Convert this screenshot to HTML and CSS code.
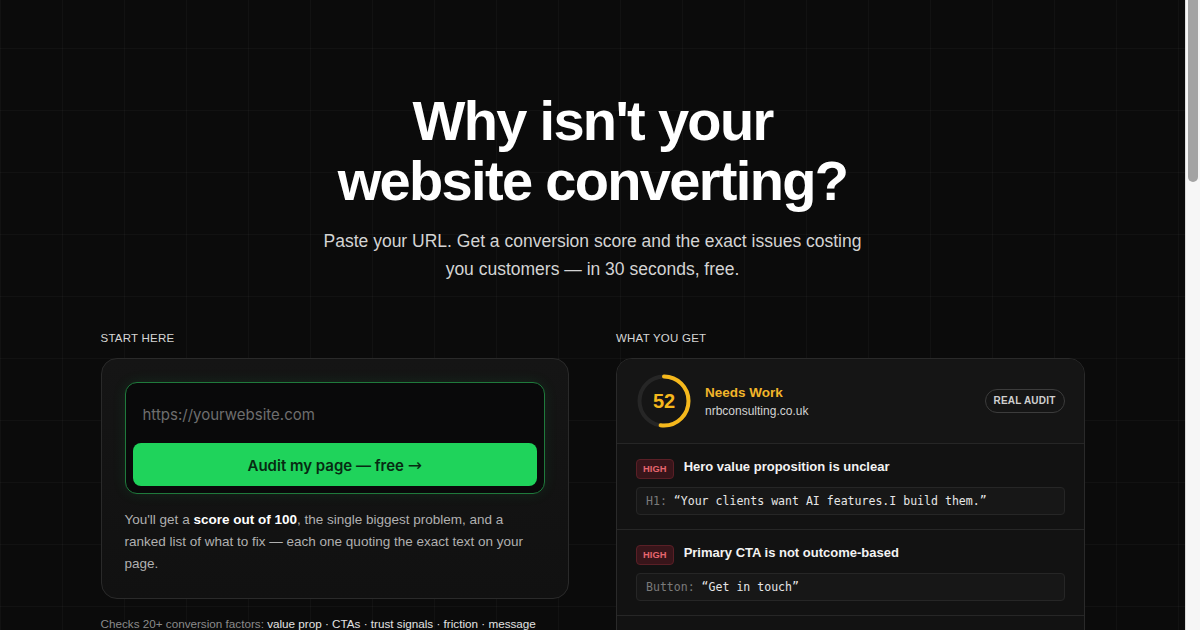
FILE: index.html
```html
<!DOCTYPE html>
<html lang="en">
<head>
<meta charset="utf-8">
<title>Why isn't your website converting?</title>
<link rel="stylesheet" href="styles.css">
</head>
<body>
<main class="page">
  <section class="hero">
    <h1 class="title">Why isn't your<br>website converting?</h1>
    <p class="subtitle">Paste your URL. Get a conversion score and the exact issues costing you customers — in 30 seconds, free.</p>
  </section>

  <section class="columns">
    <div class="col">
      <div class="label">START HERE</div>
      <div class="card form-card">
        <form class="url-group">
          <input class="url-input" type="text" placeholder="https://yourwebsite.com">
          <button class="cta" type="button">Audit my page — free <span class="arrow">→</span></button>
        </form>
        <p class="explain">You'll get a <strong>score out of 100</strong>, the single biggest problem, and a ranked list of what to fix — each one quoting the exact text on your page.</p>
      </div>
      <p class="checks">Checks 20+ conversion factors: <span class="hl">value prop · CTAs · trust signals · friction · message match</span></p>
    </div>

    <div class="col">
      <div class="label">WHAT YOU GET</div>
      <div class="card report">
        <div class="report-head">
          <div class="ring">
            <svg viewBox="0 0 54 54" width="54" height="54">
              <circle cx="27" cy="27" r="24.5" fill="none" stroke="#262626" stroke-width="4"/>
              <circle cx="27" cy="27" r="24.5" fill="none" stroke="#f5b81c" stroke-width="4" stroke-linecap="round" stroke-dasharray="80 154" transform="rotate(-90 27 27)"/>
            </svg>
            <span class="ring-num">52</span>
          </div>
          <div class="head-text">
            <div class="status">Needs Work</div>
            <div class="domain">nrbconsulting.co.uk</div>
          </div>
          <span class="pill">REAL AUDIT</span>
        </div>
        <div class="issue">
          <div class="issue-top"><span class="badge">HIGH</span><span class="issue-title">Hero value proposition is unclear</span></div>
          <div class="quote"><span class="q-key">H1:</span> “Your clients want AI features.I build them.”</div>
        </div>
        <div class="issue">
          <div class="issue-top"><span class="badge">HIGH</span><span class="issue-title">Primary CTA is not outcome-based</span></div>
          <div class="quote"><span class="q-key">Button:</span> “Get in touch”</div>
        </div>
        <div class="issue">
          <div class="issue-top"><span class="badge badge-med">MED</span><span class="issue-title">No trust signals above the fold</span></div>
          <div class="quote"><span class="q-key">Hero:</span> no logos, reviews or results found</div>
        </div>
      </div>
    </div>
  </section>
</main>
<div class="scrollbar" aria-hidden="true"><div class="scroll-thumb"></div></div>
</body>
</html>
```

FILE: styles.css
```css
* { box-sizing: border-box; }

html, body {
  margin: 0;
  padding: 0;
}

body {
  background-color: #0b0b0b;
  background-image:
    linear-gradient(to right, rgba(255,255,255,0.028) 1px, transparent 1px),
    linear-gradient(to bottom, rgba(255,255,255,0.028) 1px, transparent 1px);
  background-size: 62px 62px;
  background-position: 0 -14px;
  color: #f2f2f2;
  font-family: "Liberation Sans", Arial, sans-serif;
  min-height: 1100px;
  padding-right: 15px;
}

.page {
  max-width: 984px;
  margin: 0 auto;
  padding: 91px 0 120px;
}

.hero {
  text-align: center;
}

.title {
  margin: 0;
  font-size: 56px;
  line-height: 60px;
  font-weight: 700;
  letter-spacing: -0.03em;
  color: #ffffff;
}

.subtitle {
  margin: 16px auto 0;
  max-width: 560px;
  font-size: 17.5px;
  line-height: 28px;
  color: #d4d4d4;
}

.columns {
  margin-top: 47px;
  display: grid;
  grid-template-columns: 1fr 1fr;
  gap: 47px;
}

.label {
  font-size: 11.5px;
  line-height: 16px;
  letter-spacing: 0.02em;
  color: #d6d6d6;
  margin-bottom: 12px;
}

.card {
  border: 1px solid #2a2a2a;
  border-radius: 16px;
  background: linear-gradient(180deg, #151515 0%, #111111 100%);
}

.form-card {
  padding: 23px;
}

.url-group {
  margin: 0;
  border: 1px solid #1f7a3c;
  border-radius: 12px;
  background: #09090a;
  padding: 7px;
  display: flex;
  flex-direction: column;
  gap: 5px;
  box-shadow: 0 0 14px rgba(30, 215, 96, 0.10);
}

.url-input {
  height: 48px;
  border: 0;
  outline: 0;
  background: transparent;
  padding: 0 10px;
  font-family: Inter, "Noto Sans", sans-serif;
  font-size: 15px;
  color: #e0e0e0;
}

.url-input::placeholder {
  color: #6e6e6e;
}

.cta {
  height: 43px;
  border: 0;
  border-radius: 8px;
  background: #1fd35b;
  color: #072a12;
  font-family: Inter, "Noto Sans", sans-serif;
  font-size: 15px;
  font-weight: 600;
  cursor: pointer;
}

.arrow {
  font-family: "DejaVu Sans", sans-serif;
  font-size: 17px;
  font-weight: 400;
}

.explain {
  margin: 15px 0 0;
  font-size: 13.5px;
  line-height: 22px;
  color: #b0b0b0;
}

.explain strong {
  color: #ffffff;
  font-weight: 700;
}

.checks {
  margin: 16px 0 0;
  font-size: 11.7px;
  line-height: 18px;
  color: #8a8a8a;
}

.checks .hl {
  color: #e2e2e2;
}

.report {
  overflow: hidden;
  background: #121212;
}

.report-head {
  display: flex;
  align-items: center;
  gap: 14px;
  padding: 15px 19px 15px 20px;
  background: #151515;
  border-bottom: 1px solid #262626;
}

.ring {
  position: relative;
  width: 54px;
  height: 54px;
  flex: none;
}

.ring svg {
  display: block;
}

.ring-num {
  position: absolute;
  inset: 0;
  display: flex;
  align-items: center;
  justify-content: center;
  font-size: 20px;
  font-weight: 700;
  color: #f5b81c;
}

.head-text {
  flex: 1;
  display: flex;
  flex-direction: column;
  gap: 1px;
}

.status {
  font-size: 13.5px;
  line-height: 18px;
  font-weight: 700;
  color: #f2b52a;
}

.domain {
  font-size: 12px;
  line-height: 16px;
  color: #d2d2d2;
}

.pill {
  flex: none;
  border: 1px solid #3c3c3c;
  border-radius: 999px;
  padding: 0 8px;
  height: 24px;
  line-height: 22px;
  font-size: 10px;
  font-weight: 700;
  letter-spacing: 0.02em;
  color: #cfcfcf;
}

.issue {
  padding: 15px 19px 14px 19px;
  border-bottom: 1px solid #262626;
}

.issue-top {
  display: flex;
  align-items: flex-start;
  gap: 10px;
}

.badge {
  flex: none;
  height: 20px;
  padding: 0 6px;
  line-height: 18px;
  border: 1px solid #5a1f26;
  border-radius: 4px;
  background: #38151a;
  color: #e7666f;
  font-size: 9.3px;
  font-weight: 700;
  letter-spacing: 0.01em;
}

.badge-med {
  border-color: #5a4a1f;
  background: #33290f;
  color: #e6b23a;
}

.issue-title {
  font-size: 13px;
  line-height: 15px;
  font-weight: 700;
  color: #f3f3f3;
}

.quote {
  margin-top: 8px;
  height: 28px;
  line-height: 26px;
  padding: 0 9px;
  border: 1px solid #262626;
  border-radius: 4px;
  background: #171717;
  font-family: "DejaVu Sans Mono", "Liberation Mono", monospace;
  font-size: 11.55px;
  color: #e6e6e6;
  white-space: nowrap;
}

.q-key {
  color: #7a7a7a;
}

.scrollbar {
  position: fixed;
  top: 0;
  right: 0;
  width: 15px;
  height: 100vh;
  background: #f6f6f6;
  border-left: 1px solid #dcdcdc;
}

.scroll-thumb {
  margin: 0 2px 0 2px;
  height: 182px;
  border-radius: 0 0 5px 5px;
  background: #a3a3a3;
}
```
